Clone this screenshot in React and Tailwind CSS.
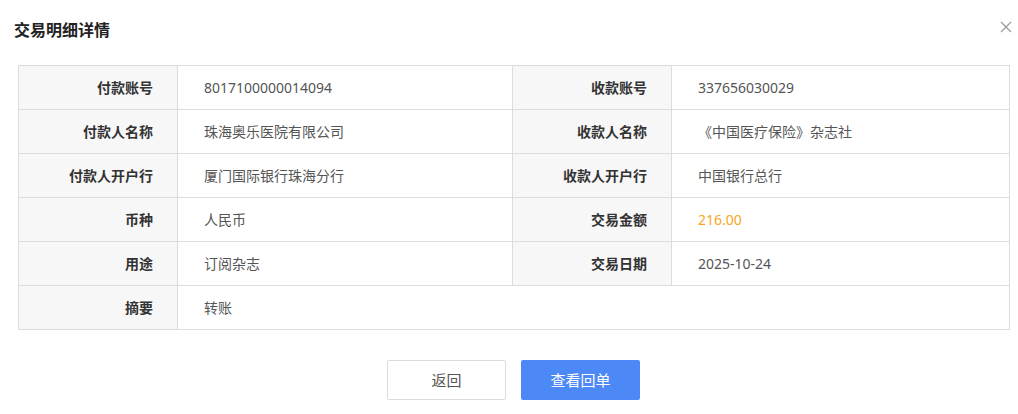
const rows = [
  ["付款账号", "8017100000014094", "收款账号", "337656030029"],
  ["付款人名称", "珠海奥乐医院有限公司", "收款人名称", "《中国医疗保险》杂志社"],
  ["付款人开户行", "厦门国际银行珠海分行", "收款人开户行", "中国银行总行"],
  ["币种", "人民币", "交易金额", "216.00"],
  ["用途", "订阅杂志", "交易日期", "2025-10-24"],
];

function Label({ children }) {
  return (
    <td className="h-[44px] border border-[#dcdcdc] bg-[#f7f7f7] pr-[24px] text-right text-[14px] font-bold text-[#333]">
      {children}
    </td>
  );
}

function Value({ children, highlight, span }) {
  return (
    <td
      colSpan={span}
      className={
        "h-[44px] border border-[#dcdcdc] pl-[26px] text-[14px] " +
        (highlight ? "text-[#f5a623]" : "text-[#555]")
      }
    >
      {children}
    </td>
  );
}

export default function App() {
  return (
    <div
      className="h-[414px] w-[1018px] bg-white"
      style={{ fontFamily: '"Noto Sans", "Noto Sans CJK SC", "Microsoft YaHei", sans-serif' }}
    >
      {/* Header */}
      <div className="flex h-[59px] items-center justify-between pl-[14px] pr-[6px]">
        <h2 className="text-[16px] font-bold text-[#222]">交易明细详情</h2>
        <button className="mb-[6px] text-[#999]">
          <svg width="12" height="12" viewBox="0 0 12 12" fill="none" stroke="currentColor" strokeWidth="1.2">
            <path d="M1 1 L11 11 M11 1 L1 11" />
          </svg>
        </button>
      </div>

      {/* Detail table */}
      <div className="px-[18px] pt-[6px]">
        <table className="w-[992px] table-fixed border-collapse">
          <colgroup>
            <col className="w-[159px]" />
            <col className="w-[335px]" />
            <col className="w-[159px]" />
            <col />
          </colgroup>
          <tbody>
            {rows.map((r) => (
              <tr key={r[0]}>
                <Label>{r[0]}</Label>
                <Value>{r[1]}</Value>
                <Label>{r[2]}</Label>
                <Value highlight={r[2] === "交易金额"}>{r[3]}</Value>
              </tr>
            ))}
            <tr>
              <Label>摘要</Label>
              <Value span={3}>转账</Value>
            </tr>
          </tbody>
        </table>
      </div>

      {/* Actions */}
      <div className="mt-[30px] flex justify-center gap-[15px] pl-[9px]">
        <button className="h-[40px] w-[119px] rounded-[2px] border border-[#dcdcdc] bg-white text-[15px] text-[#555]">
          返回
        </button>
        <button className="h-[40px] w-[119px] rounded-[2px] bg-[#4d88f7] text-[15px] text-white">
          查看回单
        </button>
      </div>
    </div>
  );
}
